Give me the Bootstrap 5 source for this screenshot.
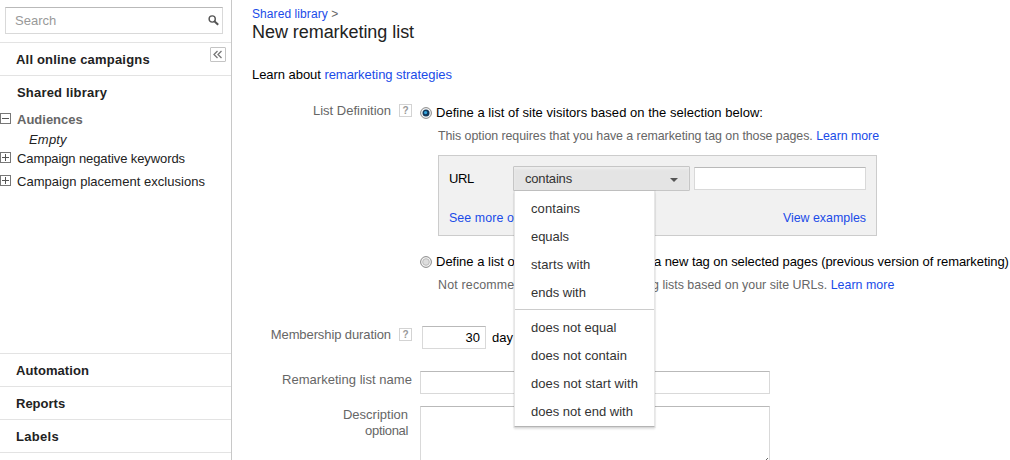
<!DOCTYPE html>
<html lang="en">
<head>
<meta charset="utf-8">
<title>New remarketing list</title>
<link href="https://cdn.jsdelivr.net/npm/bootstrap@5.3.0/dist/css/bootstrap.min.css" rel="stylesheet">
<style>
body{font:13px/15px "Liberation Sans",Arial,sans-serif;color:#222;width:1010px;height:460px;overflow:hidden;background:#fff}
a{color:#1a4be8;text-decoration:none}
.t{white-space:nowrap;display:inline-block;height:15px;vertical-align:top}
.mut{color:#666}
.dk{color:#000}
/* letter spacing steps and the smaller secondary text */
.k-1{letter-spacing:-.1px}.k-05{letter-spacing:-.05px}.k-07{letter-spacing:-.07px}.k-2{letter-spacing:-.18px}.k-3{letter-spacing:-.33px}
.k03{letter-spacing:.03px}.k1{letter-spacing:.08px}.k2{letter-spacing:.19px}.k3{letter-spacing:.3px}
.sm2{font-size:12.4px}
.sm2 .t{line-height:17px}
/* sidebar */
.shell{height:460px;overflow:hidden}
.side{width:232px;height:460px;border-right:1px solid #c8c8c8}
.side .rule{height:33px;border-top:1px solid #e3e3e3;padding:9px 0 0 16px;font-weight:bold}
.side .rule.first{margin-top:8px}
.side .rule.open{height:37px;padding-left:17px}
.fld{border:1px solid #d9d9d9;border-top-color:#b9b9b9;border-radius:0;background:#fff;height:23px;padding:0}
.search{margin:7px 0 0 5px;width:218px;height:27px;padding:0 3px 1px 9px;color:#999}
.collapse-btn{width:16px;height:15px;border:1px solid #c4c4c4;border-radius:1px;margin:-5px 5px 0 0}
.node{height:20px}
.node.sub{height:19px;padding-left:29px}
.node.neg{height:23px}
.node.exc{height:179px}
.box{width:11px;height:11px;border:1px solid #777;flex:none;margin:1px 6px 0 0}
.box svg{display:block}
/* main column */
.page{padding-left:20px;width:778px;height:460px}
.crumb{font-size:12px;padding-top:7px;height:22px}
.title{font-size:18px;line-height:20px;height:20px;color:#222;font-weight:400}
.learn{margin-top:25px;height:36px}
.r-def{height:223px}.r-dur{height:45px}.r-name{height:35px}
.lab{width:160px;margin-right:8px;color:#666;flex:none}
.lab.dn{padding-top:1px}
.lab.desc{padding:1px 4px 0 0}
.lab.desc div{height:16px}
.help{width:13px;height:13px;border:1px solid #d3d3d3;font-size:10px;line-height:11px;font-weight:bold;color:#999;text-align:center;margin:1px 0 0 8px}
.radio1{padding-top:2px;height:25px}
.radio2{margin-top:18px;height:23px}
.dot{width:12px;height:12px;margin:2px 4px 0 0}
.note{padding-left:18px}
.gap1{width:218px}
.gap2{width:214px}
.panel{width:439px;height:81px;margin:12px 0 0 18px;border:1px solid #ccc;background:#f1f1f1;padding:10px}
.url{width:64px;padding-top:5px}
.drop{width:177px;height:25px;border:1px solid #c6c6c6;border-radius:1px;background:#e4e4e4;box-shadow:inset 0 2px 2px #eee,inset 0 1px 0 #d9d9d9;padding:4px 11px 0 11px;color:#333}
.drop svg{margin-top:7px}
.val{width:172px;margin:1px 0 0 4px}
.more{padding-top:19px}
.opts{position:absolute;left:1px;top:25px;width:141px;height:236px;background:#fff;border:1px solid #e6e6e6;border-width:0 1px 1px;border-bottom-color:#b4b4b4;box-shadow:0 2px 2px rgba(0,0,0,.13),0 0 0 1px rgba(0,0,0,.04);z-index:5;padding-top:4px}
.opts div{height:28px;padding:6px 0 0 16px;color:#333}
.opts hr{margin:2px 0 4px;border:0;border-top:1px solid #ccc;opacity:1}
.days{width:64px;margin-left:2px;padding-right:5px}
.unit{margin:4px 0 0 6px}
.wide{width:350px}
.area{height:61px}
</style>
</head>
<body>
<div class="shell d-flex">
<aside class="side flex-shrink-0">
  <div class="fld search d-flex align-items-center justify-content-between"><span class="t">Search</span>
    <svg width="11" height="11" viewBox="0 0 11 11" fill="none" stroke="#555"><circle cx="4.2" cy="4" r="3.1" stroke-width="1.4"/><path d="M6.4 6.2L10.2 9.8" stroke-width="2"/></svg></div>
  <div class="rule first d-flex justify-content-between"><span class="t k2">All online campaigns</span>
    <span class="collapse-btn d-flex align-items-center justify-content-center"><svg width="10" height="9" viewBox="0 0 10 9" fill="none" stroke="#777" stroke-width="1.3"><path d="M4.5 1L1 4.5L4.5 8M8.5 1L5 4.5L8.5 8"/></svg></span></div>
  <div class="rule open"><span class="t k2">Shared library</span></div>
  <div class="node d-flex"><span class="box"><svg width="9" height="9"><path d="M1 4.5h7" stroke="#555"/></svg></span><b class="t mut">Audiences</b></div>
  <div class="node sub"><i class="t k2">Empty</i></div>
  <div class="node neg d-flex"><span class="box"><svg width="9" height="9"><path d="M1 4.5h7M4.5 1v7" stroke="#555"/></svg></span><span class="t k-1">Campaign negative keywords</span></div>
  <div class="node exc d-flex"><span class="box"><svg width="9" height="9"><path d="M1 4.5h7M4.5 1v7" stroke="#555"/></svg></span><span class="t k03">Campaign placement exclusions</span></div>
  <div class="rule"><span class="t k1">Automation</span></div>
  <div class="rule"><span class="t">Reports</span></div>
  <div class="rule"><span class="t k3">Labels</span></div>
  <div class="rule"></div>
</aside>
<main class="page">
  <div class="crumb"><a href="#" class="t k1">Shared library</a> <span class="mut">&gt;</span></div>
  <h1 class="title m-0"><span class="t k-05">New remarketing list</span></h1>
  <div class="learn dk"><span class="t k-05">Learn about <a href="#">remarketing strategies</a></span></div>

  <div class="r-def d-flex">
    <div class="lab d-flex justify-content-end"><span class="t">List Definition</span><span class="help">?</span></div>
    <div>
      <div class="radio1 d-flex dk"><svg class="dot" viewBox="0 0 12 12"><circle cx="6" cy="6" r="5.4" fill="#f4f4f4" stroke="#888"/><circle cx="6" cy="6" r="3.5" fill="#123a5e"/><circle cx="5.6" cy="5.6" r="1.6" fill="#35a5dd"/></svg><span class="t k03">Define a list of site visitors based on the selection below:</span></div>
      <div class="note mut sm2"><span class="t k-05">This option requires that you have a remarketing tag on those pages. <a href="#">Learn more</a></span></div>
      <div class="panel">
        <div class="d-flex">
          <span class="t dk url k-3">URL</span>
          <div class="position-relative">
            <div class="drop d-flex justify-content-between"><span class="t k-2">contains</span><svg width="8" height="4"><path d="M0 0h8L4 4z" fill="#555"/></svg></div>
            <div class="opts">
              <div><span class="t k1">contains</span></div><div><span class="t k-05">equals</span></div><div><span class="t k1">starts with</span></div><div><span class="t">ends with</span></div>
              <hr>
              <div><span class="t">does not equal</span></div><div><span class="t k03">does not contain</span></div><div><span class="t k1">does not start with</span></div><div><span class="t">does not end with</span></div>
            </div>
          </div>
          <input class="fld val" aria-label="URL value">
        </div>
        <div class="more d-flex justify-content-between sm2"><a href="#" class="t k1">See more o</a><a href="#" class="t">View examples</a></div>
      </div>
      <div class="radio2 d-flex dk"><svg class="dot" viewBox="0 0 12 12"><circle cx="6" cy="6" r="5.4" fill="#f4f4f4" stroke="#888"/><circle cx="6" cy="6" r="3.3" fill="#ddd" stroke="#bbb"/></svg><span class="t gap1">Define a list of</span><span class="t k-07">a new tag on selected pages (previous version of remarketing)</span></div>
      <div class="note d-flex mut sm2"><span class="t gap2 k2">Not recomme</span><span class="t k03">g lists based on your site URLs. <a href="#">Learn more</a></span></div>
    </div>
  </div>

  <div class="r-dur d-flex">
    <div class="lab dn d-flex justify-content-end"><span class="t k-1">Membership duration</span><span class="help">?</span></div>
    <input class="fld days text-end dk" value="30" aria-label="Days">
    <span class="t unit dk">day</span>
  </div>
  <div class="r-name d-flex">
    <div class="lab dn text-end"><span class="t k03">Remarketing list name</span></div>
    <input class="fld wide" aria-label="Remarketing list name">
  </div>
  <div class="d-flex">
    <div class="lab desc text-end"><div><span class="t">Description</span></div><div><span class="t k-3">optional</span></div></div>
    <textarea class="fld wide area" aria-label="Description"></textarea>
  </div>
</main>
</div>
<script src="https://cdn.jsdelivr.net/npm/bootstrap@5.3.0/dist/js/bootstrap.bundle.min.js"></script>
</body>
</html>
